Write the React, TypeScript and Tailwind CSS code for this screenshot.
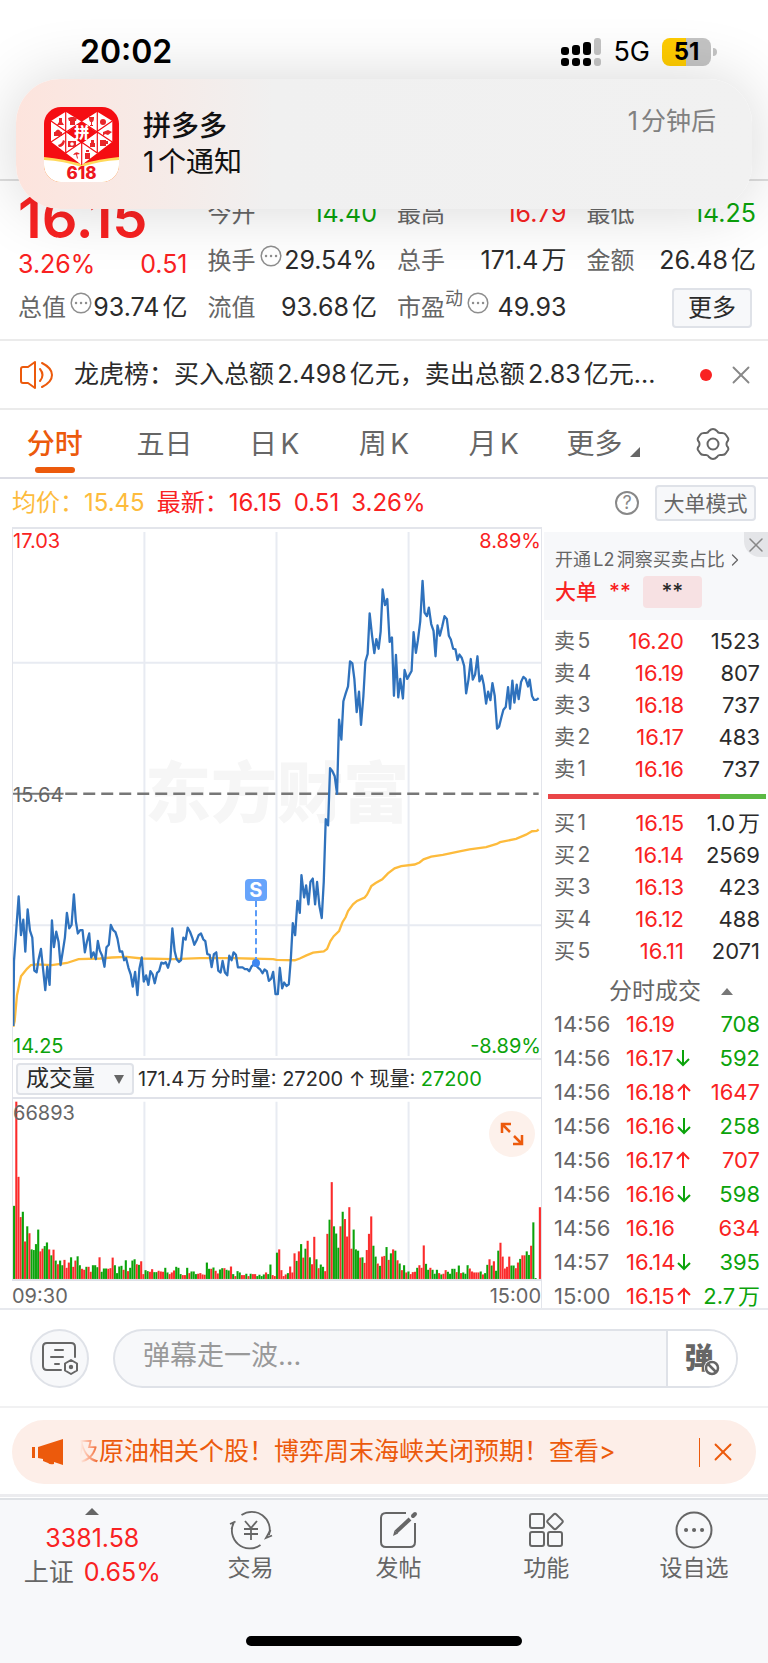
import { useState } from 'react';
import type { ReactNode } from 'react';
import { X, ChevronRight } from 'lucide-react';

const RED = 'text-[#f92222]';
const GREEN = 'text-[#0ba30b]';

const SELLS = [
  ['卖5', '16.20', '1523'],
  ['卖4', '16.19', '807'],
  ['卖3', '16.18', '737'],
  ['卖2', '16.17', '483'],
  ['卖1', '16.16', '737'],
];

const BUYS = [
  ['买1', '16.15', '1.0万'],
  ['买2', '16.14', '2569'],
  ['买3', '16.13', '423'],
  ['买4', '16.12', '488'],
  ['买5', '16.11', '2071'],
];

type Trade = { time: string; price: string; dir?: 'up' | 'down'; volume: string; sell?: boolean };

const TRADES: Trade[] = [
  { time: '14:56', price: '16.19', volume: '708', sell: true },
  { time: '14:56', price: '16.17', dir: 'down', volume: '592', sell: true },
  { time: '14:56', price: '16.18', dir: 'up', volume: '1647' },
  { time: '14:56', price: '16.16', dir: 'down', volume: '258', sell: true },
  { time: '14:56', price: '16.17', dir: 'up', volume: '707' },
  { time: '14:56', price: '16.16', dir: 'down', volume: '598', sell: true },
  { time: '14:56', price: '16.16', volume: '634' },
  { time: '14:57', price: '16.14', dir: 'down', volume: '395', sell: true },
  { time: '15:00', price: '16.15', dir: 'up', volume: '2.7万', sell: true },
];

// Price and average lines, in chart units (viewBox 38 21 1587 1542)
const PRICE_LINE =
  '39,1470 41,1280 55,1092 62,1205 69,1160 75,1253 82,1130 89,1192 96,1212 102,1308 109,1313 115,1275 122,1245 128,1300 135,1365 141,1297 148,1350 155,1162 161,1240 168,1195 175,1225 181,1292 188,1250 194,1212 200,1140 207,1185 214,1175 221,1086 227,1165 233,1200 240,1190 247,1190 254,1255 260,1225 267,1200 273,1270 280,1255 287,1275 293,1222 299,1250 306,1265 313,1297 319,1240 326,1233 332,1175 339,1190 346,1196 352,1215 359,1253 366,1252 372,1278 378,1272 385,1300 392,1320 398,1355 405,1312 412,1380 418,1302 425,1270 431,1340 438,1322 445,1350 451,1310 458,1320 464,1345 471,1315 477,1310 484,1285 491,1288 497,1284 504,1300 511,1275 517,1185 524,1252 530,1275 537,1283 543,1278 550,1212 557,1218 563,1183 570,1195 577,1213 583,1233 590,1220 596,1205 603,1200 610,1217 616,1222 622,1260 629,1262 635,1298 642,1260 649,1255 655,1308 662,1314 668,1280 675,1314 682,1322 688,1265 695,1278 701,1255 708,1262 714,1299 728,1299 735,1304 742,1304 748,1310 755,1296 762,1290 768,1293 775,1300 781,1305 788,1316 794,1305 801,1310 807,1338 814,1332 820,1312 827,1377 834,1377 840,1300 847,1360 853,1343 860,1353 867,1348 873,1275 879,1170 886,1205 893,1105 900,1140 905,1030 913,1095 919,1060 926,1115 932,1050 939,1040 946,1115 952,1050 959,1120 966,1155 972,1050 978,867 985,885 991,718 998,727 1005,742 1012,793 1018,577 1025,635 1031,523 1038,500 1045,480 1051,407 1058,413 1064,458 1071,555 1078,495 1084,592 1091,510 1097,408 1104,385 1110,267 1117,330 1124,383 1130,342 1137,370 1143,320 1149,197 1156,243 1163,225 1170,350 1177,337 1183,507 1189,388 1196,512 1202,458 1210,515 1215,432 1223,458 1229,447 1236,435 1242,322 1249,382 1255,345 1262,290 1269,172 1275,265 1282,275 1288,250 1295,298 1302,318 1308,392 1314,302 1321,332 1328,305 1335,275 1342,283 1348,332 1354,343 1361,370 1368,372 1374,403 1380,387 1387,397 1394,420 1400,500 1407,460 1414,400 1420,460 1427,445 1434,392 1440,465 1447,448 1453,475 1460,530 1466,495 1473,520 1479,470 1486,508 1493,603 1499,597 1506,570 1512,548 1519,540 1526,482 1532,545 1539,463 1545,527 1552,475 1558,517 1565,467 1572,452 1579,458 1586,480 1591,460 1598,508 1604,519 1611,519 1618,514';

const AVERAGE_LINE =
  '39,1472 43,1455 50,1380 62,1325 80,1303 92,1292 110,1290 155,1292 200,1286 235,1275 300,1273 335,1270 380,1268 425,1273 520,1275 600,1272 700,1272 820,1275 830,1277 885,1278 900,1273 920,1264 940,1256 972,1252 982,1245 992,1222 1002,1208 1018,1193 1028,1168 1038,1152 1045,1135 1060,1115 1072,1105 1095,1095 1102,1087 1115,1062 1128,1053 1148,1042 1165,1025 1185,1010 1205,1004 1245,999 1260,993 1272,984 1295,976 1330,971 1380,961 1410,955 1460,948 1492,939 1502,934 1550,924 1580,912 1598,902 1612,901 1618,897';

// One bar per minute: g = falling, r = rising, then the height
const VOLUMES =
  'g222 r538 r310 r188 g204 r114 g160 r139 g90 g88 g106 g150 r84 r92 g100 g111 r90 g72 r89 g56 r45 g56 g42 r58 r34 r50 g66 r37 r56 g69 g42 r31 r28 g37 r37 r22 g42 g42 g36 r66 g22 g32 g32 r31 r33 r65 g42 g18 g38 g40 r28 g57 r24 g34 g56 g60 r45 g43 r54 r15 g27 g24 r22 r30 g21 g21 r25 r23 r22 g34 g20 r15 r20 r26 g37 g34 g15 r12 r12 g34 r18 g23 g23 g15 r16 r18 r14 r13 g50 g31 r31 g35 r25 r17 g29 g33 r33 g28 g26 r38 g15 r9 g24 g20 r12 r12 g16 r9 g16 r15 r15 g9 g13 g9 g14 r20 g15 g44 r12 r9 g80 r90 r27 r9 r14 g18 r38 r20 r78 g55 r84 g106 r65 g92 r116 g66 r45 r128 g60 r33 g44 g37 r24 r137 g180 r294 g160 g138 g95 r160 g204 r182 r129 r218 r92 g150 g90 g86 r65 g66 r49 r88 r137 r190 g101 g68 r47 g40 r68 r70 g97 r58 g78 r90 g86 r57 g47 r27 g42 r20 g23 r15 r21 r22 g34 r42 r34 r102 g46 g28 r34 g28 g16 g28 r18 g14 r16 r27 g22 g16 g31 g31 r21 g41 r18 g20 g16 g42 r32 r23 r20 r20 r20 g23 r14 g18 g43 r60 g41 r54 g25 g86 r110 r68 r32 r37 r68 g41 g41 r33 r50 g61 r72 r72 g84 g73 r101 g172 g3 g0 r218'.split(' ');

function AppIcon() {
  return (
    <svg viewBox="0 0 75 75" className="size-[75px] shrink-0 rounded-[17px]" aria-hidden="true">
      <rect width="75" height="75" fill="#f50d12" />
      <path d="M0 50Q20 52 37.500 57Q55 52 75 50V75H0Z" fill="#ffd95a" />
      <path d="M0 53Q20 54 37.500 60Q55 54 75 53V75H0Z" fill="#fff" />
      <path d="M21.700 4.700L37.700 14.700L53.300 4.700L68.300 14V34.700L37.700 58L7 34.700V14Z" fill="#fff" />
      <g stroke="#f50d12" strokeWidth="1.200" fill="none">
        <path d="M21.700 4V46M53.300 4V46M37.700 35V58M7 14L53.300 46M68.300 14L21.700 46M7 35L37.700 14.700L68.300 35" />
      </g>
      <path d="M37.700 14.700L53 25.500L37.700 36.500L22.500 25.500Z" fill="#f50d12" />
      <g fill="#e8262a">
        <path d="M15 11h3v4l2 3h-7l2-3Z" />
        <path d="M24 11l3-1h3l3 1-1 3h-1v4h-5v-4h-1Z" />
        <path d="M45 10h5c0 4-1 5-2 5v3h1v1h-3v-1h1v-3c-1 0-2-1-2-5Z" />
        <circle cx="59" cy="15" r="3" />
        <path d="M10 25h8v4h-8ZM11 25q3-5 6 0" />
        <path d="M59 25l5-2 4 2-4 3-3-1-2 2Z" />
        <path d="M14 38q4-1 5-5l2 1q-1 6-6 6Z" />
        <path d="M24 34h8v6h-8Z" />
        <circle cx="28" cy="37" r="1.800" fill="#fff" />
        <path d="M47 33h3v3h1v4h-5v-4h1Z" />
        <path d="M56 33h6v6h-6ZM62 34h2v3h-2Z" />
        <path d="M29 48q3-5 7-1l-3 .5 1 4h-1l-1-4Z" />
        <path d="M41 46h5v6h-5ZM42 43h3v2h-3Z" />
      </g>
      <text x="37.700" y="31" textAnchor="middle" fontSize="15" fontWeight="900" fill="#fff">拼</text>
      <text x="37.500" y="72" textAnchor="middle" fontSize="17" fontWeight="800" fill="#ee1620">618</text>
    </svg>
  );
}

function DotsIcon() {
  return (
    <svg viewBox="0 0 22 22" className="mb-2.5 ml-1 size-[22px] shrink-0" fill="none" stroke="#8e8e8e" strokeWidth="1.5" aria-hidden="true">
      <circle cx="11" cy="11" r="9.800" />
      <path d="M6 11h.1M11 11h.1M16 11h.1" strokeWidth="2.400" strokeLinecap="round" />
    </svg>
  );
}

function Stat({ label, value, extra, tone = 'text-[#2b2b2b]' }: { label: string; value: string; extra?: ReactNode; tone?: string }) {
  return (
    <div className="flex h-[47px] items-center justify-between whitespace-nowrap">
      <span className="flex items-center text-2xl text-[#666]">
        {label}
        {extra}
      </span>
      <span className={`-ml-2 text-[25px] ${tone}`}>{value}</span>
    </div>
  );
}

function StatusBar() {
  return (
    <div className="flex h-[104px] items-center justify-between pr-[51px] pl-20">
      <span className="text-[32px] font-semibold">20:02</span>
      <div className="flex items-center gap-3">
        <svg viewBox="0 0 40 28" className="h-7 w-10" aria-hidden="true">
          <g fill="#000">
            <rect x="0" y="9" width="8" height="8" rx="3" />
            <rect x="11" y="7" width="8" height="10" rx="3" />
            <rect x="22" y="4" width="8" height="13" rx="3" />
            <rect x="0" y="20" width="8" height="8" rx="3" />
            <rect x="11" y="20" width="8" height="8" rx="3" />
            <rect x="22" y="20" width="8" height="8" rx="3" />
          </g>
          <g fill="#c4c4c4">
            <rect x="33" y="0" width="7" height="17" rx="3" />
            <rect x="33" y="20" width="7" height="8" rx="3" />
          </g>
        </svg>
        <span className="text-[27px]">5G</span>
        <div className="flex items-center gap-0.5">
          <span className="flex h-7 w-[49px] items-center justify-center rounded-lg bg-linear-to-r from-[#ffcc00] from-50% to-[#c4c4c4] to-50% text-2xl font-bold">
            51
          </span>
          <span className="h-2 w-1 rounded-r-full bg-[#c4c4c4]" />
        </div>
      </div>
    </div>
  );
}

function Notification() {
  return (
    <div className="absolute top-[79px] right-4 left-4 z-10 flex h-[130px] items-center gap-6 rounded-[44px] bg-linear-to-r from-[#fde4dd] via-[#f0f0f0] via-35% to-[#f1f1f1] pr-9 pl-7 shadow-[0_0_64px_rgba(0,0,0,0.16)]">
      <AppIcon />
      <div className="flex-1 text-[28px] leading-9 text-[#111]">
        <div className="font-medium">拼多多</div>
        <div>1个通知</div>
      </div>
      <span className="mb-11 text-[25px] text-[#808080]">1分钟后</span>
    </div>
  );
}

function Quote() {
  return (
    <section className="grid grid-cols-4 gap-5 border-t-2 border-[#dedede] pt-[9px] pr-3 pb-2 pl-[18px]">
      <div>
        <div className={`flex h-14 items-center text-[56px] font-semibold ${RED}`}>16.15</div>
        <div className={`flex h-[38px] items-center justify-between text-[25px] ${RED}`}>
          <span>3.26%</span>
          <span>0.51</span>
        </div>
        <Stat label="总值" value="93.74亿" extra={<DotsIcon />} />
      </div>
      <div>
        <Stat label="今开" value="14.40" tone={GREEN} />
        <Stat label="换手" value="29.54%" extra={<DotsIcon />} />
        <Stat label="流值" value="93.68亿" />
      </div>
      <div>
        <Stat label="最高" value="16.79" tone={RED} />
        <Stat label="总手" value="171.4万" />
        <Stat
          label="市盈"
          value="49.93"
          extra={
            <>
              <sup className="text-lg">动</sup>
              <DotsIcon />
            </>
          }
        />
      </div>
      <div>
        <Stat label="最低" value="14.25" tone={GREEN} />
        <Stat label="金额" value="26.48亿" />
        <div className="flex h-[47px] items-center justify-end pr-1">
          <button className="h-10 w-20 rounded border-2 border-[#dfe2e8] bg-[#f7f8fa] text-2xl leading-none text-[#2b2b2b]">更多</button>
        </div>
      </div>
    </section>
  );
}

function Ticker() {
  return (
    <section className="flex h-[71px] items-center border-y-2 border-[#ebebeb] pr-3 pl-5">
      <svg viewBox="0 0 34 28" className="h-7 w-[34px] shrink-0" fill="none" stroke="#ec5a0c" strokeWidth="2" strokeLinejoin="round" strokeLinecap="round" aria-hidden="true">
        <path d="M1 8q0-2 2-2h5l7-5v26l-7-5H3q-2 0-2-2Z" />
        <path d="M20 8q5 6 0 12M22 2q10 5 10 12t-10 12" />
      </svg>
      <a href="#lhb" className="ml-5 min-w-0 flex-1 truncate text-[25px] text-[#2b2b2b]">龙虎榜：买入总额2.498亿元，卖出总额2.83亿元...</a>
      <span className="ml-4 size-3 rounded-full bg-[#f92222]" />
      <button aria-label="关闭" className="ml-3.5 text-[#888]">
        <X size={30} strokeWidth={1.5} />
      </button>
    </section>
  );
}

function Tabs() {
  const [active, setActive] = useState('分时');
  return (
    <nav className="grid h-[69px] grid-cols-7 items-center justify-items-center border-b-2 border-[#dcdde5] text-[28px] text-[#666]">
      {['分时', '五日', '日K', '周K', '月K'].map((t) => (
        <button
          key={t}
          onClick={() => setActive(t)}
          className={t === active ? 'relative font-medium text-[#ec5a0c] after:absolute after:inset-x-2 after:-bottom-2 after:h-1.5 after:rounded-full after:bg-[#ec5a0c]' : ''}
        >
          {t}
        </button>
      ))}
      <button className="flex items-end gap-2">
        更多
        <svg viewBox="0 0 10 10" className="mb-2 size-[10px]" fill="#666" aria-hidden="true">
          <path d="M10 0V10H0Z" />
        </svg>
      </button>
      <button aria-label="设置">
        <svg viewBox="0 0 34 32" className="h-8 w-[34px]" fill="none" stroke="#666" strokeWidth="2" strokeLinejoin="round" aria-hidden="true">
          <path d="M13 3q2-2 4-2t4 2q1 2 3 2h2q3 0 4 2l2 3q1 2-1 4-1 2 0 4 2 2 1 4l-2 3q-1 2-4 2h-2q-2 0-3 2-2 2-4 2t-4-2q-1-2-3-2H8q-3 0-4-2l-2-3q-1-2 1-4 1-2 0-4-2-2-1-4l2-3q1-2 4-2h2q2 0 3-2Z" />
          <circle cx="17" cy="16" r="5.500" />
        </svg>
      </button>
    </nav>
  );
}

function PriceChart() {
  return (
    <div className="relative h-[531px] border-x border-t-2 border-[#e3e5eb] text-xl leading-6">
      <div className="absolute inset-x-0 top-[220px] text-center text-[66px] leading-[88px] font-black text-[#f6f6f6]">东方财富</div>
      <svg viewBox="38 21 1587 1542" preserveAspectRatio="none" className="absolute inset-0 h-full w-full" fill="none" role="img" aria-label="分时走势">
        <g stroke="#e8ebf2" strokeWidth="2">
          <path d="M433 30V1557M830 30V1557M1227 30V1557M38 411H1625M38 1176H1625" vectorEffect="non-scaling-stroke" />
        </g>
        <path d="M38 793H190" stroke="#777" strokeWidth="2" vectorEffect="non-scaling-stroke" />
        <path d="M195 793H1618" stroke="#777" strokeWidth="2.500" strokeDasharray="12 6" vectorEffect="non-scaling-stroke" />
        <polyline points={AVERAGE_LINE} stroke="#fdbb3c" strokeWidth="2.300" vectorEffect="non-scaling-stroke" />
        <polyline points={PRICE_LINE} stroke="#2f72bd" strokeWidth="2.300" strokeLinejoin="round" vectorEffect="non-scaling-stroke" />
      </svg>
      <span className={`absolute top-0 left-0 ${RED}`}>17.03</span>
      <span className={`absolute top-0 right-0 ${RED}`}>8.89%</span>
      <span className="absolute top-[254px] left-0 text-[#666]">15.64</span>
      <span className={`absolute bottom-0 left-0 ${GREEN}`}>14.25</span>
      <span className={`absolute right-0 bottom-0 ${GREEN}`}>-8.89%</span>
      <div className="absolute top-[350px] left-[46%] flex -translate-x-1/2 flex-col items-center">
        <span className="flex size-[22px] items-center justify-center rounded bg-[#67a4fb] text-xl font-bold text-white">S</span>
        <span className="h-[62px] border-l-2 border-dashed border-[#5a9bf8]" />
        <span className="-mt-1 size-2 rounded-full bg-[#3d87f2]" />
      </div>
    </div>
  );
}

function VolumeChart() {
  const step = 1587 / VOLUMES.length;
  return (
    <div className="relative h-[184px] border-x border-y-2 border-[#e0e2e9] text-xl leading-6">
      <svg viewBox="0 0 1587 546" preserveAspectRatio="none" className="absolute inset-0 h-full w-full" role="img" aria-label="成交量">
        <path d="M395 8V546M792 8V546M1189 8V546" stroke="#e8ebf2" strokeWidth="2" vectorEffect="non-scaling-stroke" />
        {VOLUMES.map((v, i) => {
          const h = Number(v.slice(1));
          return <rect key={i} x={i * step} y={546 - h} width={step} height={h} fill={v[0] === 'r' ? '#fb2b2b' : '#0ba30b'} stroke="#fff" strokeOpacity="0.3" />;
        })}
      </svg>
      <span className="absolute top-0.5 left-0 text-[#666]">66893</span>
      <button aria-label="展开" className="absolute top-3 right-1.5 flex size-[46px] items-center justify-center rounded-full bg-[#fdf1eb]">
        <svg viewBox="0 0 24 24" className="size-6" fill="none" stroke="#ec5a0c" strokeWidth="2.500" aria-hidden="true">
          <path d="M2 11V2H11M2.500 2.500L10 10M22 13V22H13M21.500 21.500L14 14" />
        </svg>
      </button>
    </div>
  );
}

function BookRows({ rows }: { rows: string[][] }) {
  return (
    <table className="w-full table-fixed text-[22px] leading-8">
      <tbody>
        {rows.map(([name, price, volume]) => (
          <tr key={name} className="h-8">
            <th scope="row" className="w-14 text-left text-[21px] leading-8 font-normal text-[#666]">{name}</th>
            <td className={`w-[74px] text-right ${RED}`}>{price}</td>
            <td className="text-right text-[#2b2b2b]">{volume}</td>
          </tr>
        ))}
      </tbody>
    </table>
  );
}

function OrderBook() {
  return (
    <aside className="pt-[5px]">
      <div className="relative ml-0.5 h-[88px] bg-[#f7f8fa] px-[11px] pt-3.5">
        <a href="#l2" className="flex items-center text-lg leading-7 text-[#666]">
          开通L2洞察买卖占比
          <ChevronRight size={20} strokeWidth={1.5} />
        </a>
        <div className={`flex h-9 items-center gap-3 text-[21px] font-medium ${RED}`}>
          大单
          <span>**</span>
          <span className="flex h-8 w-[59px] items-center justify-center rounded-sm bg-[#f7e1e3] text-[#2b2b2b]">**</span>
        </div>
        <button aria-label="关闭" className="absolute top-0 right-0 flex h-[25px] w-6 items-center justify-center rounded-bl-2xl bg-[#e4e5e8] text-[#888]">
          <X size={24} strokeWidth={1.5} />
        </button>
      </div>
      <div className="pt-[5px] pr-2 pl-3">
        <BookRows rows={SELLS} />
      </div>
      <div className="mt-[9px] mr-0.5 mb-2 ml-1.5 flex h-[5px] bg-[#5cb944]">
        <div className="w-[79%] bg-[#ea4648]" />
      </div>
      <div className="pr-2 pl-3">
        <BookRows rows={BUYS} />
        <button className="flex h-10 w-full items-end justify-center gap-5 pl-7 text-[23px] leading-8 text-[#666]">
          分时成交
          <svg viewBox="0 0 12 7" className="mb-3 h-[7px] w-3" fill="#777" aria-hidden="true">
            <path d="M6 0L12 7H0Z" />
          </svg>
        </button>
        <table className="-mb-[5px] w-full table-fixed text-[22px] leading-8">
          <tbody>
            {TRADES.map((t, i) => (
              <tr key={i} className="h-[34px]">
                <td className="w-[72px] text-[#666]">{t.time}</td>
                <td className={`w-[68px] whitespace-nowrap ${RED}`}>
                  <span className="flex items-center">
                    {t.price}
                    {t.dir && (
                      <svg viewBox="0 0 14 18" className={t.dir === 'up' ? 'ml-0.5 h-[18px] w-3.5 text-[#f92222]' : 'ml-0.5 h-[18px] w-3.5 rotate-180 text-[#0ba30b]'} fill="none" stroke="currentColor" strokeWidth="2" aria-hidden="true">
                        <path d="M7 17V2M1 8L7 2L13 8" />
                      </svg>
                    )}
                  </span>
                </td>
                <td className={`text-right ${t.sell ? GREEN : RED}`}>{t.volume}</td>
              </tr>
            ))}
          </tbody>
        </table>
      </div>
    </aside>
  );
}

function CommentBar() {
  return (
    <section className="flex h-[98px] items-center gap-6 border-b-2 border-[#f1f1f2] px-[30px]">
      <button aria-label="弹幕设置" className="flex size-[59px] shrink-0 items-center justify-center rounded-full border-2 border-[#dfe2e8] bg-[#f7f8fa]">
        <svg viewBox="0 0 38 34" className="h-[34px] w-[38px]" fill="none" stroke="#666" strokeWidth="2" strokeLinecap="round" aria-hidden="true">
          <path d="M20 29H6q-4 0-4-4V6q0-4 4-4H30q4 0 4 4V16" />
          <path d="M14 9h8M10 16h12M14 23h4" />
          <path d="M30 19l6 3.500v7L30 33l-6-3.500v-7Z" strokeLinejoin="round" />
          <circle cx="30" cy="26" r="1.200" fill="#666" />
        </svg>
      </button>
      <div className="flex h-[59px] min-w-0 flex-1 overflow-hidden rounded-full border-2 border-[#dfe2e8] bg-[#f7f8fa]">
        <input aria-label="弹幕" placeholder="弹幕走一波..." className="min-w-0 flex-1 pb-1 pl-7 text-[27px] outline-none placeholder:text-[#999]" />
        <button aria-label="弹幕开关" className="relative w-[70px] border-l-2 border-[#dfe2e8] bg-white pr-1.5 text-[29px] leading-none font-black text-[#666]">
          弹
          <svg viewBox="0 0 16 16" className="absolute right-4 bottom-2.5 size-4 rounded-full bg-white" fill="none" stroke="#666" strokeWidth="2.500" aria-hidden="true">
            <circle cx="8" cy="8" r="6" />
            <path d="M4 4L12 12" />
          </svg>
        </button>
      </div>
    </section>
  );
}

function Banner() {
  return (
    <section className="border-b-3 border-[#ececef] px-3 pt-3 pb-2.5">
      <div className="flex h-16 items-center rounded-[32px] bg-[#fdeee8] pr-[18px] pl-5 text-[#ec5a0c]">
        <svg viewBox="0 0 32 27" className="h-[27px] w-8 shrink-0" fill="#ec5a0c" aria-hidden="true">
          <path d="M0 8h3v11H0ZM6 8L31 0V26L22 23V25Q18 26 16 24L11 22V20L6 19Z" />
        </svg>
        <a href="#news" className="ml-4 flex min-w-0 flex-1 overflow-hidden text-[25px] whitespace-nowrap">
          <span className="flex w-[19px] shrink-0 justify-end overflow-hidden bg-linear-to-r from-[#fdeee8] to-[#ec5a0c] bg-clip-text text-transparent">及</span>
          原油相关个股！博弈周末海峡关闭预期！查看&gt;
        </a>
        <span className="mr-2 ml-3 h-[29px] border-l" />
        <button aria-label="关闭">
          <X size={30} strokeWidth={1.5} />
        </button>
      </div>
    </section>
  );
}

function NavItem({ label, children }: { label: string; children: ReactNode }) {
  return (
    <a href="#nav" className="flex flex-col items-center pt-2.5 text-[23px] leading-8 text-[#666]">
      <svg viewBox="0 0 44 40" className="mb-0.5 h-10 w-11" fill="none" stroke="#666" strokeWidth="2" aria-hidden="true">
        {children}
      </svg>
      {label}
    </a>
  );
}

function BottomNav() {
  return (
    <footer className="mt-px border-t-2 border-[#dfe2e6] bg-[#f7f8fa]">
      <nav className="grid h-[136px] grid-cols-[23%_repeat(4,1fr)]">
        <a href="#index" className="flex flex-col items-center pt-2 pl-2 text-[25px] leading-[34px] text-[#666]">
          <svg viewBox="0 0 14 7" className="mb-1.5 h-[7px] w-3.5" fill="#666" aria-hidden="true">
            <path d="M7 0L14 7H0Z" />
          </svg>
          <span className={RED}>3381.58</span>
          <span className="flex gap-2.5">
            上证 <span className={RED}>0.65%</span>
          </span>
        </a>
        <NavItem label="交易">
          <path d="M12.500 5A18 18 0 0 1 40 25" strokeWidth="1.800" />
          <path d="M41.500 20L37 28L43 25.500M31.500 35A18 18 0 0 1 5 12L2.500 19M1 14L6.500 11.500" strokeWidth="1.800" />
          <path d="M16 11L22 18L28 11M22 18V30M15 19H29M15 24H29" strokeWidth="1.800" />
        </NavItem>
        <NavItem label="发帖">
          <path d="M30 3H10Q5 3 5 8V32Q5 37 10 37H34Q39 37 39 32V13" />
          <path d="M20 22L34 9" strokeWidth="4" />
          <path d="M17 26L18.500 20.500L22 23.500Z" fill="#666" stroke="none" />
          <path d="M37 6L39 4" strokeWidth="4" strokeLinecap="round" />
        </NavItem>
        <NavItem label="功能">
          <rect x="6" y="4" width="14" height="14" rx="2" />
          <rect x="6" y="22" width="14" height="14" rx="2" />
          <rect x="24" y="22" width="14" height="14" rx="2" />
          <rect x="25" y="5.500" width="12" height="12" rx="2" transform="rotate(45 31 11.500)" />
        </NavItem>
        <NavItem label="设自选">
          <circle cx="22" cy="20" r="17.500" />
          <path d="M14 20h.1M22 20h.1M30 20h.1" strokeWidth="4" strokeLinecap="round" />
        </NavItem>
      </nav>
      <div className="mx-auto h-[10px] w-[36%] rounded-full bg-black" />
      <div className="h-[17px]" />
    </footer>
  );
}

function App() {
  return (
    <div className="relative overflow-hidden bg-white font-['Inter','Noto_Sans_CJK_SC',sans-serif] text-black [text-autospace:normal]">
      <StatusBar />
      <Notification />
      <div className="pt-[75px]">
        <Quote />
      </div>
      <Ticker />
      <Tabs />
      <section className="flex h-12 items-center gap-3 px-3 text-2xl whitespace-nowrap">
        <span className="text-[#fdbb3c]">均价：15.45</span>
        <span className={RED}>最新：16.15</span>
        <span className={RED}>0.51</span>
        <span className={RED}>3.26%</span>
        <button aria-label="说明" className="ml-auto flex size-6 items-center justify-center rounded-full border-2 border-[#888] text-lg leading-none text-[#888]">?</button>
        <button className="ml-1 h-9 w-[101px] rounded border-2 border-[#dfe2e8] bg-[#f7f8fa] text-[21px] leading-none text-[#666]">大单模式</button>
      </section>
      <main className="grid grid-cols-[minmax(0,1fr)_226px] border-b-2 border-[#e7e9ee]">
        <div className="pl-3">
          <PriceChart />
          <div className="flex h-[39px] items-center gap-1 border-x border-t-2 border-[#e3e5eb] pl-[3px] text-xl whitespace-nowrap text-[#2b2b2b]">
            <div className="relative">
              <select aria-label="指标" className="h-8 w-[118px] appearance-none rounded border-2 border-[#dfe2e8] bg-[#f7f8fa] pl-2 text-[23px] leading-none">
                <option>成交量</option>
              </select>
              <svg viewBox="0 0 10 9" className="pointer-events-none absolute top-3 right-2.5 h-[9px] w-[10px]" fill="#666" aria-hidden="true">
                <path d="M0 0H10L5 9Z" />
              </svg>
            </div>
            <span>171.4万</span>
            <span>分时量: 27200 ↑</span>
            <span>
              现量: <span className={GREEN}>27200</span>
            </span>
          </div>
          <VolumeChart />
          <div className="flex h-[27px] items-end justify-between border-r border-[#e3e5eb] text-xl leading-6 text-[#666]">
            <span>09:30</span>
            <span>15:00</span>
          </div>
        </div>
        <OrderBook />
      </main>
      <CommentBar />
      <Banner />
      <BottomNav />
    </div>
  );
}

export default App;
